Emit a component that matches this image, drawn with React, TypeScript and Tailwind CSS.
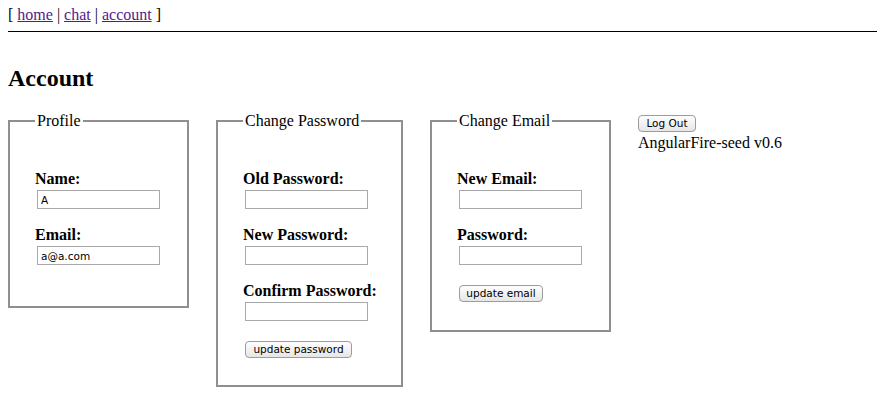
import React from 'react';

const serif = { fontFamily: '"Liberation Serif", "Times New Roman", serif' };
const sans = { fontFamily: '"DejaVu Sans", "Lucida Grande", sans-serif' };

function Field({ label, value, first }: { label: string; value?: string; first?: boolean }) {
  return (
    <div className={first ? '' : 'mt-[17px]'}>
      <div className="font-bold text-[16px] leading-[18px]">{label}</div>
      <input
        readOnly
        value={value ?? ''}
        style={sans}
        className="block mt-[2px] ml-[2px] w-[123px] h-[19px] border border-[#a9a9a9] bg-white px-[3px] text-[10.5px] text-black outline-none"
      />
    </div>
  );
}

function MacButton({ children, width }: { children: React.ReactNode; width: string }) {
  return (
    <button
      style={sans}
      className={`${width} block h-[17px] rounded-[4px] border border-[#9c9c9c] bg-gradient-to-b from-white to-[#e6e6e6] text-[10.5px] leading-[15px] text-black text-center`}
    >
      {children}
    </button>
  );
}

function Box({
  title,
  width,
  pad,
  children,
}: {
  title: string;
  width: string;
  pad: string;
  children: React.ReactNode;
}) {
  return (
    <fieldset className={`${width} ${pad} border-2 border-solid border-[#8f8f8f] pt-[40px] shrink-0`}>
      <legend className="px-[2px] text-[16px] leading-[18px]">{title}</legend>
      {children}
    </fieldset>
  );
}

export default function App() {
  return (
    <div style={serif} className="min-h-screen bg-white text-black pl-[8px] pt-[6px] text-[16px]">
      <div className="leading-[18px]">
        [ <a href="#" className="text-[#551a8b] underline">home</a> |{' '}
        <a href="#" className="text-[#551a8b] underline">chat</a> |{' '}
        <a href="#" className="text-[#551a8b] underline">account</a> ]
      </div>
      <div className="mt-[7px] h-px bg-black" />

      <h2 className="mt-[33px] text-[24px] leading-[27px] font-bold">Account</h2>

      <div className="mt-[20px] flex items-start gap-[27px]">
        <Box title="Profile" width="w-[181px]" pad="pl-[25px] pb-[41px]">
          <Field label="Name:" value="A" first />
          <Field label="Email:" value="a@a.com" />
        </Box>

        <Box title="Change Password" width="w-[187px]" pad="pl-[25px] pb-[27px]">
          <Field label="Old Password:" first />
          <Field label="New Password:" />
          <Field label="Confirm Password:" />
          <div className="mt-[20px] ml-[2px]">
            <MacButton width="w-[107px]">update password</MacButton>
          </div>
        </Box>

        <Box title="Change Email" width="w-[181px]" pad="pl-[25px] pb-[28px]">
          <Field label="New Email:" first />
          <Field label="Password:" />
          <div className="mt-[20px] ml-[2px]">
            <MacButton width="w-[84px]">update email</MacButton>
          </div>
        </Box>

        <div className="pt-[3px]">
          <MacButton width="w-[58px]">Log Out</MacButton>
          <div className="mt-[2px] leading-[18px]">AngularFire-seed v0.6</div>
        </div>
      </div>
    </div>
  );
}
